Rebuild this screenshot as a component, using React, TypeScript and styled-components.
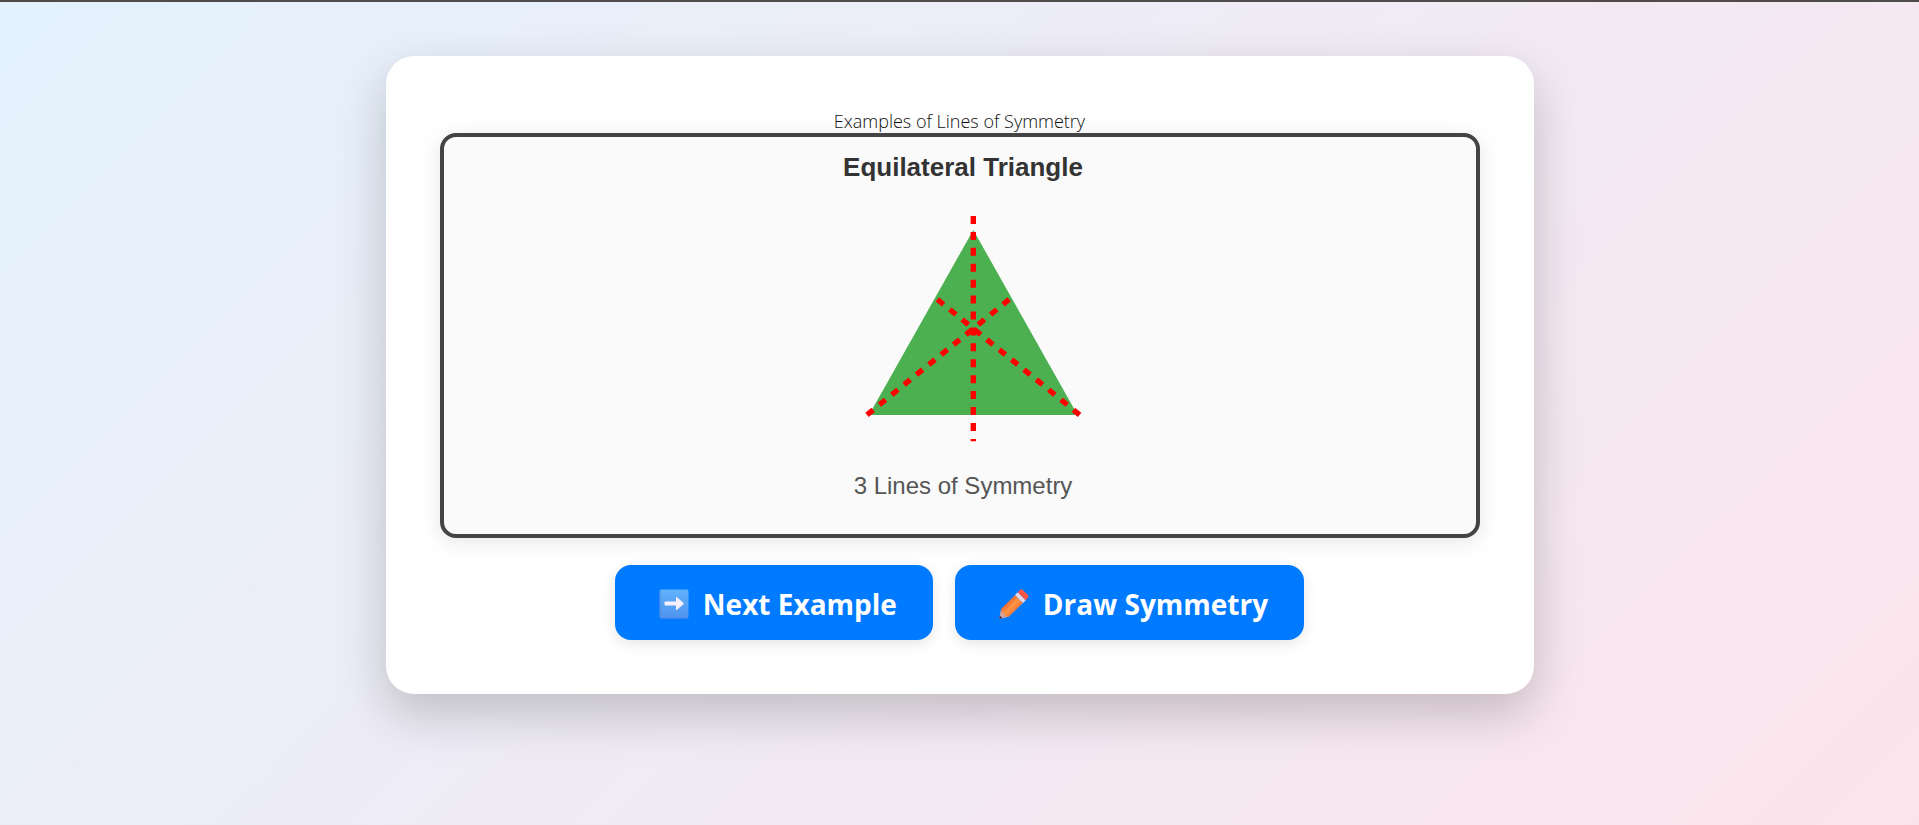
import React from "react";
import styled, { createGlobalStyle } from "styled-components";

const GlobalStyle = createGlobalStyle`
  *, *::before, *::after { box-sizing: border-box; }
  body {
    margin: 0;
    font-family: "Segoe UI", "Open Sans", "Noto Sans", sans-serif;
    color: #111;
  }
`;

const Page = styled.main`
  min-height: 100vh;
  display: flex;
  flex-direction: column;
  align-items: center;
  padding: 54px 24px;
  border-top: 2px solid #4f4c4b;
  background: linear-gradient(135deg, #e3f2fd, #fce4ec) border-box;
`;

const Card = styled.section`
  width: 100%;
  max-width: 1148px;
  padding: 54px;
  display: flex;
  flex-direction: column;
  border-radius: 28px;
  background: #fff;
  box-shadow: 0 20px 50px rgba(0, 0, 0, 0.2);
`;

const Title = styled.h1`
  margin: 0;
  padding-bottom: 1px;
  font-size: 18px;
  font-weight: 350;
  line-height: 22px;
  text-align: center;
`;

const Board = styled.figure`
  margin: 0;
  border: 4px solid #444;
  border-radius: 16px;
  background: #fafafa;
  box-shadow: 0 4px 22px rgba(0, 0, 0, 0.1);
`;

const Drawing = styled.svg`
  display: block;
  width: 100%;
  height: auto;
  font-family: Arial, "Liberation Sans", sans-serif;
`;

const Actions = styled.div`
  display: flex;
  flex-wrap: wrap;
  justify-content: center;
  gap: 22px;
  margin-top: 27px;
`;

const ActionButton = styled.button`
  display: flex;
  align-items: center;
  gap: 14px;
  height: 75px;
  padding: 2px 36px 0 44px;
  border: 0;
  border-radius: 16px;
  background: #007bff;
  color: #fff;
  font-family: inherit;
  font-size: 28px;
  font-weight: 700;
  white-space: nowrap;
  cursor: pointer;
  box-shadow: 0 4px 14px rgba(0, 0, 0, 0.1);
`;

const ArrowIcon = () => (
  <svg width="30" height="30" viewBox="0 0 30 30" aria-hidden="true">
    <defs>
      <linearGradient id="tile" x1="0" y1="0" x2="0" y2="1">
        <stop offset="0" stopColor="#60b2fb" />
        <stop offset="1" stopColor="#5093ee" />
      </linearGradient>
    </defs>
    <rect x="0.5" y="0.5" width="29" height="29" rx="2" fill="url(#tile)" />
    <path d="M1 2V28Q1 29 2 29H28" fill="none" stroke="#4a86e2" strokeWidth="1" />
    <path
      d="M6.5 12.6H17V8.6Q17 7.3 18 8.2L24.3 13.7Q25 14.5 24.3 15.3L18 20.8Q17 21.6 17 20.4V16.4H6.5Q5.5 16.4 5.5 15.5V13.5Q5.5 12.6 6.5 12.6Z"
      fill="#f8efff"
    />
  </svg>
);

const PencilIcon = () => (
  <svg width="30" height="30" viewBox="0 0 30 30" aria-hidden="true">
    <defs>
      <linearGradient id="wood" x1="0.3" y1="0.3" x2="0.7" y2="0.7">
        <stop offset="0" stopColor="#e9683f" />
        <stop offset="0.5" stopColor="#ff9440" />
        <stop offset="1" stopColor="#ee743f" />
      </linearGradient>
    </defs>
    <path d="M2 20L9 28L1.8 29.5Q0 30 0.4 28.4Z" fill="#d2a39c" />
    <path d="M2 20L16 6L24 14L9.5 28Q8 28 7 26.5Q5 26 4.5 24Q2 23 2 20Z" fill="url(#wood)" />
    <path d="M16 6L18.8 3.2L26.8 11.2L24 14Z" fill="#e6d9ea" />
    <path d="M18.8 3.2L21.3 0.8Q22.5 -0.2 23.8 0.9L29 6Q30.2 7.4 29 8.8L26.8 11.2Z" fill="#fa5648" />
    <path d="M0.9 26.7L3.2 29L1.8 29.5Q0 30 0.4 28.4Z" fill="#3c2350" />
  </svg>
);

const SymmetryDrawing = () => (
  <Drawing viewBox="0 0 1032 397" role="img" aria-label="Equilateral triangle with three lines of symmetry">
    <text x="519" y="39" textAnchor="middle" fontSize="26" fontWeight="700" fill="#333">
      Equilateral Triangle
    </text>
    <polygon points="529.3,93 425,278 633.6,278" fill="#4caf50" />
    <g stroke="#f00" strokeWidth="5.4" strokeDasharray="7.96 7.96">
      <path d="M529.3 79V304.3" />
      <path d="M423 277.8L566 161.8" />
      <path d="M635.6 277.8L492.6 161.8" />
    </g>
    <text x="519" y="357" textAnchor="middle" fontSize="24" fill="#555">
      3 Lines of Symmetry
    </text>
  </Drawing>
);

export default function App() {
  return (
    <>
      <GlobalStyle />
      <Page>
        <Card>
          <Title>Examples of Lines of Symmetry</Title>
          <Board>
            <SymmetryDrawing />
          </Board>
          <Actions>
            <ActionButton type="button">
              <ArrowIcon />
              Next Example
            </ActionButton>
            <ActionButton type="button">
              <PencilIcon />
              Draw Symmetry
            </ActionButton>
          </Actions>
        </Card>
      </Page>
    </>
  );
}
